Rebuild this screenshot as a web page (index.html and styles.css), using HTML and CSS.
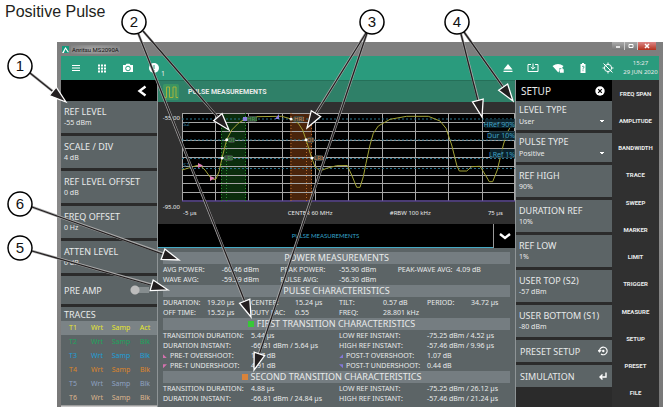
FILE: index.html
```html
<!DOCTYPE html>
<html lang="en">
<head>
<meta charset="utf-8">
<title>Positive Pulse</title>
<link rel="stylesheet" href="styles.css">
</head>
<body>
<figure class="figure">
  <figcaption class="caption">Positive Pulse</figcaption>
  <div class="window">
    <header class="titlebar">
      <svg class="logo" viewBox="0 0 8 8"><rect width="8" height="8" fill="#149a7c"/><path d="M0 8 L4 1 L8 7 L6.500 7 L4 3.500 L2 8Z" fill="#fff"/></svg>
      <span class="app-name">Anritsu MS2090A</span>
      <span class="win-buttons">
        <button class="win" aria-label="Minimize"><svg viewBox="0 0 10 8"><path d="M3 5H7" stroke="#fff" stroke-width="1.500"/></svg></button>
        <button class="win" aria-label="Maximize"><svg viewBox="0 0 10 8"><path d="M3 2.500H7V5.500H3Z" fill="none" stroke="#fff"/></svg></button>
        <button class="win win-close" aria-label="Close"><svg viewBox="0 0 10 8"><path d="M3 2L7 6M7 2L3 6" stroke="#fff" stroke-width="1.500"/></svg></button>
      </span>
    </header>

    <div class="app">
      <div class="toolbar">
        <div class="tools-left">
          <button class="tool" aria-label="Menu"><svg viewBox="0 0 12 12"><path d="M2 3.500H10M2 6H10M2 8.500H10" stroke="#fff"/></svg></button>
          <button class="tool" aria-label="Applications"><svg viewBox="0 0 12 12"><path d="M2 3.500H10M2 6.500H10M2 9.500H10" stroke="#fff" stroke-width="2" stroke-dasharray="2 1"/></svg></button>
          <button class="tool" aria-label="Screenshot"><svg viewBox="0 0 12 12"><path d="M1 3H3.500L4.500 1.800H7.500L8.500 3H11V10H1Z" fill="#fff"/><circle cx="6" cy="6.500" r="2.300" fill="#fff" stroke="#2a9b7d"/></svg></button>
          <button class="tool" aria-label="Messages"><svg viewBox="0 0 12 12"><circle cx="6" cy="6" r="5" fill="#fff"/><path d="M6 3V7M6 8V9" stroke="#2a9b7d"/></svg><sub class="count">1</sub></button>
        </div>
        <div class="tools-right">
          <button class="tool" aria-label="Eject"><svg viewBox="0 0 12 12"><path d="M6 2L10.500 7.500H1.500ZM1.500 8.700H10.500V10H1.500Z" fill="#fff"/></svg></button>
          <button class="tool" aria-label="Download"><svg viewBox="0 0 12 12"><path d="M4 2.500H1V9.500H11V2.500H8M6 1.500V7M3.800 5L6 7.200L8.200 5" fill="none" stroke="#fff"/></svg></button>
          <button class="tool" aria-label="Network"><svg viewBox="0 0 12 12"><path d="M.5 4Q6 0 11.500 4L10 6H7.500V8.500L6.300 10.500Z" fill="#fff"/><path d="M8 7.500H11.500V10.500H8ZM8.800 7.500V6.500H10.700V7.500" fill="#fff" stroke="#fff" stroke-width=".5"/></svg></button>
          <button class="tool" aria-label="Battery"><svg viewBox="0 0 12 12"><path d="M5 1H7V2H8.500V11H3.500V2H5Z" fill="#fff"/><path d="M5 4.500Q7 3.500 7 5Q7 6 6 6.500V7.500M6 8.200V9.200" fill="none" stroke="#2a9b7d" stroke-width=".8"/></svg></button>
          <button class="tool" aria-label="Location off"><svg viewBox="0 0 12 12"><circle cx="6" cy="6" r="3.600" fill="none" stroke="#fff"/><path d="M6 .5V2.500M6 9.500V11.500M.5 6H2.500M9.500 6H11.500M1.500 1.500L10.500 10.500" stroke="#fff"/></svg></button>
        </div>
        <div class="clock"><time>15:27</time><time>29 JUN 2020</time></div>
      </div>

      <div class="columns">
        <aside class="panel amplitude">
          <div class="panel-head head-back"><button class="plain" aria-label="Back"><svg class="icon-mid" viewBox="0 0 10 12"><path d="M8.500 1.500L2.500 6L8.500 10.500" fill="none" stroke="#fff" stroke-width="2.400"/></svg></button></div>
          <button class="tile"><span>REF LEVEL</span><small>-55 dBm</small></button>
          <button class="tile"><span>SCALE / DIV</span><small>4 dB</small></button>
          <button class="tile"><span>REF LEVEL OFFSET</span><small>0 dB</small></button>
          <button class="tile"><span>FREQ OFFSET</span><small>0 Hz</small></button>
          <button class="tile"><span>ATTEN LEVEL</span><small>0 dB</small></button>
          <label class="tile tile-switch" for="preamp"><span>PRE AMP</span><input class="switch" type="checkbox" id="preamp"></label>
          <section class="traces">
            <h2>TRACES</h2>
            <table>
              <tr class="t1"><td>T1</td><td>Wrt</td><td>Samp</td><td>Act</td></tr>
              <tr class="t2"><td>T2</td><td>Wrt</td><td>Samp</td><td>Blk</td></tr>
              <tr class="t3"><td>T3</td><td>Wrt</td><td>Samp</td><td>Blk</td></tr>
              <tr class="t4"><td>T4</td><td>Wrt</td><td>Samp</td><td>Blk</td></tr>
              <tr class="t5"><td>T5</td><td>Wrt</td><td>Samp</td><td>Blk</td></tr>
              <tr class="t6"><td>T6</td><td>Wrt</td><td>Samp</td><td>Blk</td></tr>
            </table>
          </section>
          <div class="panel-fade"></div>
        </aside>

        <main class="main">
          <div class="view-head">
            <svg class="pulse-icon" viewBox="0 0 16 16"><rect width="16" height="16" rx="2" fill="#3b9562"/><path d="M1 13.500H3.500V3H6.500V13.500H10V3H13V13.500H15" fill="none" stroke="#a5b13c"/></svg>
            <h1>PULSE MEASUREMENTS</h1>
          </div>
          <div class="graph">
            <div class="y-axis"><span>-55.00</span><span>-95.00</span></div>
            <svg class="plot" viewBox="0 0 333 89">
              <rect width="333" height="89" fill="#000"/>
              <rect x="39" width="25" height="88" fill="#0b2d0d"/>
              <rect x="108" width="22" height="88" fill="#4a240b"/>
              <path class="grid" d="M0 .5H333M0 9.500H333M0 18.500H333M0 27.500H333M0 35.500H333M0 44.500H333M0 53.500H333M0 62.500H333M0 70.500H333M0 79.500H333M.5 0V88M33.500 0V88M66.500 0V88M100.500 0V88M133.500 0V88M166.500 0V88M200.500 0V88M233.500 0V88M266.500 0V88M300.500 0V88M332.500 0V88"/>
              <path d="M0 88H333" stroke="#65519b" stroke-width="1.500"/>
              <path class="refs" d="M0 6H333M0 27H333M0 45.500H333M0 55.500H333"/>
              <path d="M39.500 0V88M44.500 27V88M63.500 0V88" class="edge edge-green"/>
              <path d="M109 0V88M124.500 27V88M129.500 0V88" class="edge edge-orange"/>
              <path class="trace" d="M0 57L10 54L15 52.500L18 52.300L23 57L29 65.300L32 66.500L34 66L37 58.700L40 45L44.700 26.700L49.700 17L56.300 10.300L63.300 5.700L74.700 3.700L99.700 3.300L109.300 6L116.300 10.300L120.700 17L124 26.700L129.700 45L133 53.700L138 58L144.700 55.300L154.700 52.700L165.300 52.500L169.700 62L174.700 74.300H178L181.300 63.700L184 50.300L188 32L191.300 20.300L196.300 13L208 6.300L224.700 3.300H246.300L258 8L264 15.300L269.700 32L274.700 52L277.300 58H284.700L289.700 53.700L298 53.300L303 61.300L307.300 68.700H310.700L315.300 57L321.300 32L324.700 20.300L328 14.700L333 12"/>
              <g class="tags">
                <rect x="65" y="3" width="10" height="6" rx="2"/><rect x="46" y="24" width="7" height="6" rx="2"/><rect x="42" y="42" width="9" height="6" rx="2"/>
                <rect x="111" y="3" width="11" height="6" rx="2"/><rect x="125" y="24" width="7" height="6" rx="2"/><rect x="132" y="42" width="9" height="6" rx="2"/>
              </g>
              <g class="tag-green"><text x="65" y="8">HRI</text><text x="46" y="29">DI</text><text x="42" y="47">LRI</text></g>
              <g class="tag-orange"><text x="112" y="8">HRI</text><text x="125" y="29">DI</text><text x="132" y="47">LRI</text></g>
              <g class="tag-blue"><text x="1" y="13">S2</text><text x="1" y="54">S1</text></g>
              <g fill="#fff"><circle cx="44.700" cy="26.700" r="1.500"/><circle cx="40" cy="45" r="1.500"/><circle cx="109" cy="6" r="1.500"/><circle cx="124" cy="26.700" r="1.500"/><circle cx="130" cy="45" r="1.500"/></g>
              <path d="M16 50L21 52.500L16 55ZM28 63L33 65L28 68Z" fill="#e07fb8"/>
              <path d="M61 4H65V8H61ZM93 6L97 1V6Z" fill="#8a7fe0"/>
              <g class="ref-bg"><rect x="303" y="6" width="30" height="9"/><rect x="307" y="18" width="26" height="9"/><rect x="308" y="36" width="25" height="9"/></g>
              <g class="ref-label"><text x="333" y="14">HRef 90%</text><text x="333" y="25">Dur 10%</text><text x="333" y="44">LRef 1%</text></g>
            </svg>
            <div class="x-axis"><span>-5 µs</span><span>CENTER 60 MHz</span><span>#RBW 100 kHz</span><span>75 µs</span></div>
          </div>
          <div class="tabs">
            <button class="tab">PULSE MEASUREMENTS</button>
            <button class="tab-more" aria-label="More"><svg class="icon-wide" viewBox="0 0 14 10"><path d="M2 3L7 7L12 3" fill="none" stroke="#fff" stroke-width="2.400"/></svg></button>
          </div>
          <div class="results">
            <h3>POWER MEASUREMENTS</h3>
            <table>
              <tr><td>AVG POWER:</td><td>-60.46 dBm</td><td>PEAK POWER:</td><td>-55.90 dBm</td><td>PEAK-WAVE AVG:</td><td>4.09 dB</td></tr>
              <tr><td>WAVE AVG:</td><td>-59.59 dBm</td><td>PULSE AVG:</td><td>-56.30 dBm</td><td></td><td></td></tr>
            </table>
            <h3>PULSE CHARACTERISTICS</h3>
            <table>
              <tr><td>DURATION:</td><td>19.20 µs</td><td>CENTER:</td><td>15.24 µs</td><td>TILT:</td><td>0.57 dB</td><td>PERIOD:</td><td>34.72 µs</td></tr>
              <tr><td>OFF TIME:</td><td>15.52 µs</td><td>DUTY FAC:</td><td>0.55</td><td>FREQ:</td><td>28.801 kHz</td><td></td><td></td></tr>
            </table>
            <h3 class="flagged"><i class="swatch green"></i>FIRST TRANSITION CHARACTERISTICS</h3>
            <table>
              <tr><td>TRANSITION DURATION:</td><td>5.44 µs</td><td>LOW REF INSTANT:</td><td>-75.25 dBm / 4.52 µs</td></tr>
              <tr><td>DURATION INSTANT:</td><td>-66.81 dBm / 5.64 µs</td><td>HIGH REF INSTANT:</td><td>-57.46 dBm / 9.96 µs</td></tr>
              <tr><td><i class="mark pre-over"></i>PRE-T OVERSHOOT:</td><td>1.07 dB</td><td><i class="mark post-over"></i>POST-T OVERSHOOT:</td><td>1.07 dB</td></tr>
              <tr><td><i class="mark pre-under"></i>PRE-T UNDERSHOOT:</td><td>4.91 dB</td><td><i class="mark post-under"></i>POST-T UNDERSHOOT:</td><td>0.44 dB</td></tr>
            </table>
            <h3 class="flagged"><i class="swatch orange"></i>SECOND TRANSITION CHARACTERISTICS</h3>
            <table>
              <tr><td>TRANSITION DURATION:</td><td>4.88 µs</td><td>LOW REF INSTANT:</td><td>-75.25 dBm / 26.12 µs</td></tr>
              <tr><td>DURATION INSTANT:</td><td>-66.81 dBm / 24.84 µs</td><td>HIGH REF INSTANT:</td><td>-57.46 dBm / 21.24 µs</td></tr>
            </table>
          </div>
        </main>

        <aside class="panel setup">
          <div class="panel-head"><h2>SETUP</h2><button class="plain" aria-label="Close setup"><svg class="icon-mid" viewBox="0 0 10 10"><circle cx="5" cy="5" r="4.700" fill="#fff"/><path d="M3.200 3.200L6.800 6.800M6.800 3.200L3.200 6.800" stroke="#000" stroke-width="1.200"/></svg></button></div>
          <div class="tile tile-select"><label for="level">LEVEL TYPE</label><select id="level"><option>User</option></select></div>
          <div class="tile tile-select"><label for="pulse">PULSE TYPE</label><select id="pulse"><option>Positive</option></select></div>
          <button class="tile"><span>REF HIGH</span><small>90%</small></button>
          <button class="tile"><span>DURATION REF</span><small>10%</small></button>
          <button class="tile"><span>REF LOW</span><small>1%</small></button>
          <button class="tile"><span>USER TOP (S2)</span><small>-57 dBm</small></button>
          <button class="tile"><span>USER BOTTOM (S1)</span><small>-80 dBm</small></button>
          <button class="tile tile-action"><span>PRESET SETUP</span><svg class="icon-mid" viewBox="0 0 10 10"><path d="M1.500 5A3.800 3.800 0 1 1 3 8M0 4L1.500 6L3.300 4" fill="none" stroke="#fff" stroke-width="1.100"/><circle cx="5.300" cy="5" r="1.200" fill="#fff"/></svg></button>
          <button class="tile tile-action"><span>SIMULATION</span><svg class="icon-mid" viewBox="0 0 10 10"><path d="M8 1.500V6H2.500M4.500 3.500L2 6L4.500 8.500" fill="none" stroke="#fff" stroke-width="1.400"/></svg></button>
        </aside>

        <nav class="menu">
          <a href="#">FREQ SPAN</a><a href="#">AMPLITUDE</a><a href="#">BANDWIDTH</a><a href="#">TRACE</a><a href="#">SWEEP</a><a href="#">MARKER</a><a href="#">LIMIT</a><a href="#">TRIGGER</a><a href="#">MEASURE</a><a href="#">SETUP</a><a href="#">PRESET</a><a href="#">FILE</a>
        </nav>
      </div>
    </div>
  </div>

  <svg class="callouts" viewBox="0 0 663 407" preserveAspectRatio="xMinYMin meet">
    <defs>
      <marker id="head" markerUnits="userSpaceOnUse" markerWidth="24" markerHeight="16" refX="18" refY="7" orient="auto" overflow="visible"><path d="M18 7L1 1.500V12.500Z" fill="#231f20" stroke="#fff" stroke-width="1.300"/></marker>
    </defs>
    <path class="halo" d="M30 73L60 97M138 33L246 305M143 31L222 122M366 33L313 118M367 33L257 360M461 34L480 107M464 32L506 91M32 207L170 256M32 251L160 287"/>
    <g class="leaders">
      <path d="M30 73L66 102"/><path d="M138 33L251 317"/><path d="M143 31L229 130"/><path d="M366 33L307 128"/><path d="M367 33L254 370"/><path d="M461 34L482 117"/><path d="M464 32L513 101"/><path d="M32 207L179 260"/><path d="M32 251L168 290"/>
    </g>
    <g class="balloons"><circle cx="20" cy="66" r="12"/><circle cx="134" cy="22" r="12"/><circle cx="372" cy="22" r="12"/><circle cx="457" cy="22" r="12"/><circle cx="20" cy="248" r="12"/><circle cx="20" cy="204" r="12"/></g>
    <g class="numbers"><text x="20" y="71">1</text><text x="134" y="27">2</text><text x="372" y="27">3</text><text x="457" y="27">4</text><text x="20" y="253">5</text><text x="20" y="209">6</text></g>
  </svg>
</figure>
</body>
</html>
```

FILE: styles.css
```css
* { box-sizing: border-box; }
body { margin: 0; background: #fff; font-family: "Noto Sans", "Open Sans", sans-serif; color: #e8eaea; }
button, select { font: inherit; color: inherit; border: 0; padding: 0; margin: 0; background: none; text-align: left; }
h1, h2, h3 { margin: 0; font-weight: 400; }
svg { display: block; }

.figure { position: relative; margin: 0; min-height: 100vh; display: flex; flex-direction: column; overflow: hidden; }
.caption { padding: 2px 5px 0; height: 42px; font: 16px/20px "Liberation Sans", sans-serif; color: #231f20; }
.window { flex: 1; display: flex; flex-direction: column; margin-left: 57px; padding: 0 4px; background: linear-gradient(#7e7e7e, #8a8a8a 50%, #777); }

.titlebar { display: flex; height: 14px; padding-left: 1px; align-items: center; gap: 2px; background: #7e7e7e; }
.logo { width: 7px; height: 7px; }
.app-name { font: 6px/9px Roboto, sans-serif; color: #111; background: radial-gradient(#aaa, #7e7e7e); padding: 0 1px; }
.win-buttons { display: flex; margin-left: auto; align-self: flex-start; margin-right: 3px; }
.win { width: 13px; height: 8px; background: linear-gradient(#aaa, #777); border-right: 1px solid #ccc; }
.win svg { width: 10px; height: 8px; margin: auto; }
.win-close { width: 18px; background: linear-gradient(#d88, #b4311d); border-right: 0; }

.app { flex: 1; display: flex; flex-direction: column; background: #303030; }
.toolbar { display: flex; height: 24px; align-items: center; background: #2a9b7d; }
.tools-left, .tools-right { display: flex; gap: 13px; align-items: center; }
.tools-left { gap: 14px; padding-left: 9px; }
.tools-right { margin-left: auto; margin-right: 8px; }
.tool { display: flex; position: relative; width: 12px; }
.tool svg { width: 12px; height: 12px; flex: none; }
.count { position: absolute; left: 13px; top: 8px; font-size: 7px; line-height: 8px; }
.clock { width: 37px; display: flex; flex-direction: column; align-items: center; font-size: 6px; line-height: 9px; white-space: nowrap; }

.columns { flex: 1; display: flex; }
.panel { display: flex; flex-direction: column; gap: 3px; background: #2b2b2b; flex: 0 0 96px; }
.panel-head { display: flex; height: 21px; margin-bottom: -3px; align-items: center; justify-content: space-between; padding: 0 7px 0 5px; background: #000; font-size: 10px; }
.panel-head h2 { font-size: 10px; }
.head-back { justify-content: flex-end; padding-right: 10px; }
.icon-mid { width: 10px; height: 12px; }
.icon-wide { width: 14px; height: 10px; }
.tile { display: flex; flex-direction: column; height: 32px; padding: 4px 3px 0; justify-content: flex-start; background: #5c6466; font-size: 9px; line-height: 13px; white-space: nowrap; }
.tile small { font-size: 7px; line-height: 10px; }
.tile-switch { flex-direction: row; align-items: center; justify-content: space-between; height: 28px; padding: 0 8px 0 3px; }
.switch { appearance: none; margin: 0; width: 19px; height: 10px; background: radial-gradient(circle at 5px 5px, #bcbcbc 4px, transparent 5px), linear-gradient(#858c8e, #858c8e) no-repeat 5px 2px / 14px 6px; }
.tile-select { height: 29px; padding-top: 2px; }
.tile-select select { appearance: none; font-size: 7px; line-height: 10px; height: 11px; background: linear-gradient(#fff, #fff) no-repeat 81px 4px / 4px 1px, linear-gradient(#fff, #fff) no-repeat 82px 5px / 2px 1px; }
.tile-action { height: 22px; padding: 0 4px; flex-direction: row; align-items: center; justify-content: space-between; }
.traces { background: #5c6466; }
.traces h2 { height: 14px; padding-left: 3px; font-size: 9px; line-height: 15px; }
.traces table { width: 100%; table-layout: fixed; border-collapse: collapse; font-size: 7px; line-height: 14px; text-align: center; }
.traces td { padding: 0; height: 14px; }
.t1 { color: #e6e62e; background: #7b8386; }
.t2 { color: #1da45c; }
.t3 { color: #1c9fd8; }
.t4 { color: #dc842c; }
.t5 { color: #8ea2c2; }
.t6 { color: #dcb48c; }
.panel-fade { flex: 1; margin-top: -3px; background: linear-gradient(#888, #ddd); }

.main { flex: 1; min-width: 0; display: flex; flex-direction: column; border: solid #8e9496; border-width: 0 1px; background: #303030; }
.view-head { display: flex; height: 22px; align-items: center; gap: 9px; padding-left: 5px; background: #2f8068; border-top: 1px solid #257059; }
.view-head h1 { font: 700 7px/12px Roboto, sans-serif; }
.pulse-icon { width: 16px; height: 16px; }
.graph { display: grid; grid-template-columns: 24px 1fr; align-content: start; padding-top: 11px; min-height: 122px; font-size: 6px; line-height: 8px; }
.y-axis { display: flex; flex-direction: column; justify-content: space-between; align-items: flex-end; padding: 1px 2px 0 0; margin-bottom: -9px; }
.plot { width: 100%; height: auto; }
.x-axis { grid-column: 2; display: flex; justify-content: space-between; padding: 7px 12px 0 1px; }
.x-axis span:first-child { margin-right: 34px; }
.grid { stroke: #a6a6a6; fill: none; }
.refs { stroke: #29728d; stroke-dasharray: 2 2; fill: none; }
.edge { stroke-dasharray: 1 2; fill: none; }
.edge-green { stroke: #2a8c2e; }
.edge-orange { stroke: #b86a2c; }
.trace { stroke: #a3a336; fill: none; }
.tags { fill: #3c4540; }
.plot text { font-size: 6px; }
.tag-green { fill: #3fae45; }
.tag-orange { fill: #cf8444; }
.tag-blue { fill: #2c6c86; }
.ref-bg { fill: #0d2a35; opacity: .8; }
.plot .ref-label text { font-size: 7px; fill: #3fa0c4; text-anchor: end; }

.tabs { display: flex; height: 24px; background: #000; }
.tab { flex: 1; text-align: center; font: 6px/10px Lato, Roboto, sans-serif; color: #35a3c6; border-bottom: 1px solid #45a9c4; }
.tab-more { width: 22px; border-left: 1px solid #999; display: flex; align-items: center; justify-content: center; }
.results { flex: 1; padding: 4px 0 0 5px; background: #5c6466; }
.results h3 { display: flex; align-items: center; justify-content: center; gap: 3px; height: 12px; margin: 0 5px 1px 0; background: #757d81; font-size: 9px; line-height: 12px; }
.results .flagged { padding-right: 10px; }
.results table { width: 100%; table-layout: fixed; border-collapse: collapse; font-size: 7px; line-height: 10px; }
.results td { padding: 0; height: 10px; white-space: nowrap; }
.swatch { width: 6px; height: 6px; }
.green { background: #37c837; }
.orange { background: #d9833a; }
.mark { display: inline-block; width: 4px; height: 4px; margin-right: 3px; vertical-align: middle; }
.pre-over { background: #d472ae; clip-path: polygon(0 0, 100% 100%, 0 100%); }
.pre-under { background: #d472ae; clip-path: polygon(0 0, 100% 0, 0 100%); }
.post-over { background: #8478d8; clip-path: polygon(100% 0, 100% 100%, 0 100%); }
.post-under { background: #8478d8; clip-path: polygon(0 0, 100% 0, 100% 100%); }

.menu { flex: 0 0 47px; display: flex; flex-direction: column; background: #303030; }
.menu a { flex: 1; display: flex; align-items: center; justify-content: center; color: inherit; text-decoration: none; font: 700 6px/10px Roboto, sans-serif; white-space: nowrap; }

.callouts { position: absolute; left: 0; top: 0; width: 100%; height: 100%; pointer-events: none; }
.halo { fill: none; stroke: #aaa; stroke-width: 2.500; }
.leaders { fill: none; stroke: #231f20; stroke-width: 1.300; }
.leaders path { marker-end: url(#head); }
.balloons { fill: #fff; stroke: #000; stroke-width: 1.500; }
.numbers { fill: #111; font: 15px "Liberation Sans", sans-serif; text-anchor: middle; }
```
